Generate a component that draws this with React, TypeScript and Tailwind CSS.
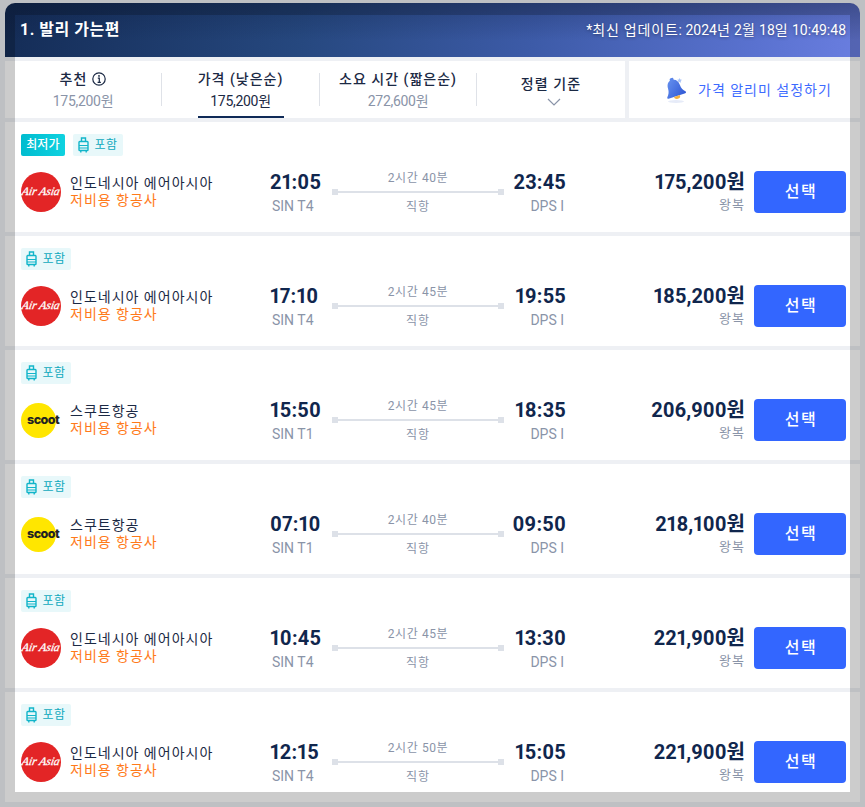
const KR = "font-['Roboto','Noto_Sans_CJK_KR',sans-serif]";
const NUM = "proportional-nums tracking-[0.2px]";

type Flight = {
  logo: "airasia" | "scoot";
  name: string;
  dep: string;
  from: string;
  dur: string;
  arr: string;
  price: string;
  lowest?: boolean;
};

const flights: Flight[] = [
  { logo: "airasia", name: "인도네시아 에어아시아", dep: "21:05", from: "SIN T4", dur: "2시간 40분", arr: "23:45", price: "175,200원", lowest: true },
  { logo: "airasia", name: "인도네시아 에어아시아", dep: "17:10", from: "SIN T4", dur: "2시간 45분", arr: "19:55", price: "185,200원" },
  { logo: "scoot", name: "스쿠트항공", dep: "15:50", from: "SIN T1", dur: "2시간 45분", arr: "18:35", price: "206,900원" },
  { logo: "scoot", name: "스쿠트항공", dep: "07:10", from: "SIN T1", dur: "2시간 40분", arr: "09:50", price: "218,100원" },
  { logo: "airasia", name: "인도네시아 에어아시아", dep: "10:45", from: "SIN T4", dur: "2시간 45분", arr: "13:30", price: "221,900원" },
  { logo: "airasia", name: "인도네시아 에어아시아", dep: "12:15", from: "SIN T4", dur: "2시간 50분", arr: "15:05", price: "221,900원" },
];

function Luggage() {
  return (
    <svg width="11" height="16" viewBox="0 0 11 16" fill="none" stroke="#12b5c9" strokeWidth="1.4">
      <path d="M3.500 4.500V1h4v3.500" />
      <rect x="1" y="4.500" width="9" height="9" rx="0.800" />
      <path d="M1 8.500h9M1 11h9" strokeWidth="1" />
      <path d="M2.800 13.500v2M8.200 13.500v2" />
    </svg>
  );
}

function Logo({ kind }: { kind: Flight["logo"] }) {
  if (kind === "airasia") {
    return (
      <div className="flex h-10 w-10 shrink-0 items-center justify-center rounded-full bg-[#e32526]">
        <span className="-skew-x-12 font-['Liberation_Serif',serif] text-[11.500px] leading-none whitespace-nowrap text-white italic [-webkit-text-stroke:0.3px_white]">
          Air Asia
        </span>
      </div>
    );
  }
  return (
    <div className="flex h-10 w-10 shrink-0 items-center">
      <div className="flex h-[35px] w-[35px] items-center rounded-full bg-[#ffe600] pl-[6px]">
        <span className="font-['Inter',sans-serif] text-[12.500px] leading-none font-extrabold tracking-[-0.5px] text-[#222222]">
          scoot
        </span>
      </div>
    </div>
  );
}

function Bell() {
  return (
    <svg width="24" height="26" viewBox="0 0 24 26">
      <defs>
        <linearGradient id="bellG" x1="0" y1="0" x2="1" y2="1">
          <stop offset="0" stopColor="#6b97f2" />
          <stop offset="1" stopColor="#3058d4" />
        </linearGradient>
      </defs>
      <ellipse cx="13" cy="24.500" rx="8" ry="1.500" fill="#e6ebf8" />
      <path d="M16.500 1l.8 1.500 1.700.3-1.200 1.200.3 1.700-1.600-.8-1.500.8.3-1.700-1.200-1.200 1.700-.3z" fill="#a9c4f7" />
      <g transform="rotate(-18 12 13)">
        <rect x="10" y="0.500" width="4" height="3.500" rx="1.500" fill="#5b86ea" />
        <path d="M12 2.500c4.200 0 6 3 6.200 7 .1 3.800 1.400 6.200 3.300 8 .7.700.3 1.800-.7 1.800H3.200c-1 0-1.400-1.100-.7-1.800 1.900-1.800 3.200-4.200 3.300-8 .2-4 2-7 6.200-7z" fill="url(#bellG)" />
        <path d="M8.800 19.300a3.200 3 0 0 0 6.400 0z" fill="#f5b342" />
      </g>
    </svg>
  );
}

function Row({ f }: { f: Flight }) {
  return (
    <div className="h-[110px] bg-white pt-3 pr-[14px] pl-4">
      <div className="flex h-[22px] gap-2">
        {f.lowest && (
          <div className="flex w-11 items-center justify-center rounded-[2px] bg-[linear-gradient(90deg,#00bccf,#0fd2e0)] text-xs font-medium tracking-[0.2px] text-white">
            최저가
          </div>
        )}
        <div className="flex w-[50px] items-center justify-center gap-[5px] rounded-[2px] bg-[#e8f8fa] text-xs tracking-[0.5px] text-[#0fa9bd]">
          <Luggage />
          <span>포함</span>
        </div>
      </div>
      <div className="mt-[15px] flex h-[42px] items-center">
        <div className="flex w-[249px] shrink-0 items-center">
          <Logo kind={f.logo} />
          <div className="-mt-px ml-[9px] text-sm leading-[18px] tracking-[1px]">
            <div className="text-[#1b2944]">{f.name}</div>
            <div className="-mt-px text-[#ff7a1a]">저비용 항공사</div>
          </div>
        </div>
        <div className="w-[62px] shrink-0">
          <div className={`text-xl leading-[26px] font-bold text-[#10264d] ${NUM}`}>{f.dep}</div>
          <div className="mt-px -mb-px pl-[2px] text-sm leading-5 text-[#8a94a8]">{f.from}</div>
        </div>
        <div className="flex w-[172px] shrink-0 flex-col">
          <div className="text-center text-xs leading-[18px] tracking-[0.6px] text-[#8a94a8]">{f.dur}</div>
          <div className="mt-[2px] flex h-[6px] items-center">
            <div className="h-[6px] w-[6px] bg-[#dde1e8]" />
            <div className="h-[2px] flex-1 bg-[#dde1e8]" />
            <div className="h-[6px] w-[6px] bg-[#dde1e8]" />
          </div>
          <div className="mt-[3px] text-center text-xs leading-[18px] tracking-[1px] text-[#8a94a8]">직항</div>
        </div>
        <div className="w-[62px] shrink-0 text-right">
          <div className={`text-xl leading-[26px] font-bold text-[#10264d] ${NUM}`}>{f.arr}</div>
          <div className="mt-px -mb-px pr-[2px] text-sm leading-5 text-[#8a94a8]">DPS I</div>
        </div>
        <div className="flex-1 text-right">
          <div className="text-xl leading-[26px] font-bold text-[#10264d] proportional-nums">{f.price}</div>
          <div className="text-[13px] leading-5 tracking-[1px] text-[#8a94a8]">왕복</div>
        </div>
        <button className="ml-[9px] h-[42px] w-[92px] shrink-0 rounded bg-[#3366ff] pl-[2px] text-base font-medium tracking-[1.5px] text-white">
          선택
        </button>
      </div>
    </div>
  );
}

function SortTab({ label, sub, active, icon }: { label: string; sub: string; active?: boolean; icon?: boolean }) {
  return (
    <div className="relative flex flex-col items-center">
      <div className="flex items-center gap-[5px] text-sm leading-[22px] font-medium tracking-[1px] text-[#1b2944]">
        {label}
        {icon && (
          <svg width="14" height="14" viewBox="0 0 14 14" fill="none" stroke="#1b2944" strokeWidth="1.200">
            <circle cx="7" cy="7" r="6.200" />
            <path d="M5.800 6.200H7.300V10.300M5.600 10.300H8.900" />
            <circle cx="7" cy="3.900" r="0.900" fill="#1b2944" stroke="none" />
          </svg>
        )}
      </div>
      <div className={`text-sm leading-[22px] tracking-[-0.3px] ${active ? "text-[#1b2944]" : "text-[#8a94a8]"}`}>{sub}</div>
    </div>
  );
}

export default function App() {
  return (
    <div className={`relative h-[807px] w-[865px] overflow-hidden bg-[#eef0f4] px-[5px] pt-[3px] ${KR}`}>
      <div className="flex h-[54px] items-start justify-between rounded-t-[10px] bg-[linear-gradient(180deg,rgba(10,25,60,.28),rgba(10,25,60,0)_70%),linear-gradient(100deg,#142c56_0%,#26487f_35%,#3d5ba8_62%,#5a72d0_88%,#6a7ee0_100%)] pt-[15px] pr-[14px] pl-[15px] text-white">
        <div className="text-base leading-6 font-bold tracking-[0.5px]">1. 발리 가는편</div>
        <div className="text-sm leading-6 [text-shadow:0_1px_3px_rgba(0,0,0,.35)]">
          *<span className="tracking-[0.8px]">최신 업데이트</span>: 2024<span className="tracking-[0.8px]">년</span> 2<span className="tracking-[0.8px]">월</span> 18<span className="tracking-[0.8px]">일</span> 10:49:48
        </div>
      </div>

      <div className="mt-1 flex h-[57px] gap-1">
        <div className="flex w-[620px] items-center bg-white">
          <div className="flex w-[156px] justify-center"><SortTab label="추천" sub="175,200원" icon /></div>
          <div className="h-[33px] w-px bg-[#dfe2e8]" />
          <div className="relative flex h-full w-[157px] items-center justify-center">
            <SortTab label="가격 (낮은순)" sub="175,200원" active />
            <div className="absolute bottom-0 left-[36px] h-[2px] w-[86px] bg-[#0f2a57]" />
          </div>
          <div className="h-[33px] w-px bg-[#dfe2e8]" />
          <div className="flex w-[156px] justify-center"><SortTab label="소요 시간 (짧은순)" sub="272,600원" /></div>
          <div className="h-[33px] w-px bg-[#dfe2e8]" />
          <div className="flex flex-1 flex-col items-center">
            <div className="text-sm leading-[22px] font-medium tracking-[1.1px] text-[#1b2944]">정렬 기준</div>
            <svg className="mt-[3px] ml-[5px]" width="14" height="9" viewBox="0 0 14 9" fill="none" stroke="#8a94a8" strokeWidth="1.200">
              <path d="M1 1l6 6 6-6" />
            </svg>
          </div>
        </div>
        <div className="flex flex-1 items-center gap-[11px] bg-white pl-[34px]">
          <Bell />
          <span className="text-sm tracking-[1px] text-[#3d6bff]">가격 알리미 설정하기</span>
        </div>
      </div>

      <div className="mt-1 flex flex-col gap-1">
        {flights.map((f, i) => (
          <Row key={i} f={f} />
        ))}
      </div>

      <div className="pointer-events-none absolute inset-0 border-[15px] border-black/20" />
    </div>
  );
}
